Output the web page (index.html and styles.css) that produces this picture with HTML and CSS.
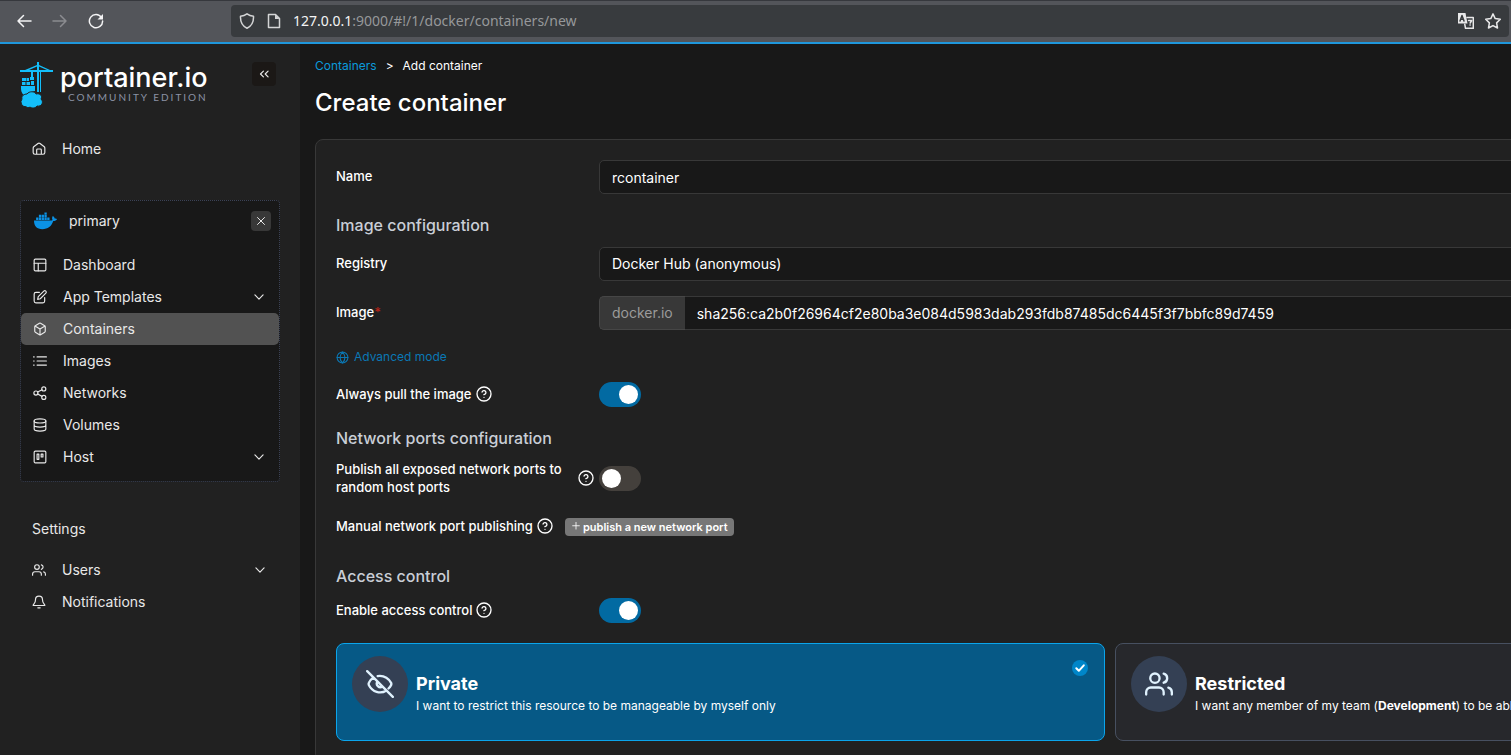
FILE: index.html
```html
<!DOCTYPE html>
<html lang="en">
<head>
  <meta charset="UTF-8">
  <meta name="viewport" content="width=device-width, initial-scale=1.0">
  <title>Portainer</title>
  <link rel="stylesheet" href="styles.css">
</head>
<body>
  <svg class="sprite" aria-hidden="true">
    <symbol id="chevron" viewBox="0 0 24 24"><path d="m5 8.500 7 7 7-7"/></symbol>
    <symbol id="help" viewBox="0 0 24 24"><circle cx="12" cy="12" r="10.500"/><path d="M9.100 9a3 3 0 0 1 5.830 1c0 2-3 3-3 3M12 17h.01"/></symbol>
    <symbol id="users" viewBox="0 0 24 24"><path d="M16 21v-2a4 4 0 0 0-4-4H5a4 4 0 0 0-4 4v2M23 21v-2a4 4 0 0 0-3-3.870M16 3.130a4 4 0 0 1 0 7.750"/><circle cx="8.500" cy="7" r="4"/></symbol>
  </svg>

  <header class="toolbar">
    <div class="nav-buttons">
      <button class="tool" aria-label="Back"><svg viewBox="0 0 16 16"><path d="M15 8H2M7.500 2.500 2 8l5.500 5.500"/></svg></button>
      <button class="tool" aria-label="Forward" disabled><svg viewBox="0 0 16 16"><path d="M1 8h13M8.500 2.500 14 8l-5.500 5.500"/></svg></button>
      <button class="tool" aria-label="Reload"><svg viewBox="0 0 16 16"><path d="M13.500 4.500A6.600 6.600 0 1 0 14.600 8"/><path class="solid" d="M15 1v5.500H9.500Z"/></svg></button>
    </div>
    <div class="address">
      <svg viewBox="0 0 16 16"><path d="M8 .8c2 1.500 4.200 2.200 6.500 2.400.3 5.600-1.700 9.800-6.500 12C3.200 13 1.200 8.800 1.500 3.200 3.800 3 6 2.300 8 .8Z"/></svg>
      <svg viewBox="0 0 16 16"><path d="M2.500 1.500h7l4 4v9h-11Z"/><path class="solid" d="M9 1.500v4.500h4.500Z"/></svg>
      <span class="url"><b>127.0.0.1</b>:9000/#!/1/docker/containers/new</span>
      <button class="tool" aria-label="Translate page"><svg viewBox="0 0 16 16"><path class="solid" d="M0 0h7.500l2 10.500H0Z"/><path d="M9 4.500h6.300v10.800H7.500l-.7-4"/><path class="ink" d="m2 8 2-5.500L6 8M2.700 6.300h2.600"/><path d="M10.500 7.500h3.200l-1.500 2.500M12 12h.2"/></svg></button>
      <button class="tool" aria-label="Bookmark page"><svg viewBox="0 0 16 16"><path d="m8 .9 2.200 4.700 5.100.7-3.700 3.600.9 5.100L8 12.600 3.500 15l.9-5.100L.7 6.300l5.100-.7Z"/></svg></button>
    </div>
  </header>

  <div class="page">
    <aside class="sidebar">
      <div class="brand">
        <svg class="crane" viewBox="0 0 33 46" aria-hidden="true">
          <path d="M17 0h2v3l11 5h3v2H0V8h5l12-5ZM9 8h8V4.500ZM19 4.500V8h8Z"/>
          <path d="M17 10h2v20h-2ZM20 10h1v20h-1ZM11 10h2v5h-2ZM10 15h4v3h-4ZM2 16h4v3H2ZM6.500 16H9v3H6.500ZM2 20h3.500v3H2ZM6.500 20H10v3H6.500ZM11 19h3v4h-3Z"/>
          <path d="M1 24h14v5c-2 0-3 1-4 2-3 0-5 1-6 3-2-1-4-4-4-7Z"/>
          <path class="cloud" d="M6 45a5 5 0 0 1-4-8c-1-3 2-5 5-5 2-3 8-3 9 0 4-1 7 2 5 5 3 3 1 8-4 7-2 3-6 2-7 1-1 1-3 1-4 0Z"/>
        </svg>
        <div class="brand-text">
          <span class="brand-name">portainer.io</span>
          <span class="brand-edition">COMMUNITY EDITION</span>
        </div>
        <button class="collapse" aria-label="Collapse sidebar"><svg viewBox="0 0 24 24"><path d="m11 17-5-5 5-5M19 17l-5-5 5-5"/></svg></button>
      </div>

      <nav>
        <a class="item home" href="#"><svg viewBox="0 0 24 24"><path d="M8 21v-7.500c0-1 .5-1.500 1.500-1.500h5c1 0 1.500.5 1.500 1.500V21M2 10.500V18a3 3 0 0 0 3 3h14a3 3 0 0 0 3-3v-7.500c0-1-.4-1.800-1-2.300l-7.200-5.600a3 3 0 0 0-3.600 0L3 8.200c-.6.5-1 1.300-1 2.300Z"/></svg>Home</a>

        <div class="environment">
          <div class="env-head">
            <svg class="whale" viewBox="0 0 24 18" aria-hidden="true"><path d="M0 8.500h17.300c.9 0 1.700-.3 2.100-.6-.8-1.300-.6-3 .2-4.200 1.200.7 1.900 1.700 2 2.700.9-.2 1.900 0 2.400.4-.5 1.400-1.900 2.200-3.900 2.200C18.300 14.500 14.500 17.500 8.700 17.500 3 17.500 0 14.500 0 8.500Z"/><path d="M2.200 5.400h2.400v2.500H2.200zM5.100 5.400h2.400v2.500H5.100zM8 5.400h2.400v2.500H8zM10.900 5.400h2.400v2.500h-2.400zM13.800 5.400h2.400v2.500h-2.400zM5.100 2.500h2.400V5H5.100zM8 2.500h2.400V5H8zM10.900 2.500h2.400V5h-2.400zM10.900 0h2.400v2.100h-2.400z"/></svg>
            <span>primary</span>
            <button class="close" aria-label="Close environment"><svg viewBox="0 0 24 24"><path d="m5 5 14 14M19 5 5 19"/></svg></button>
          </div>
          <a class="item" href="#"><svg viewBox="0 0 24 24"><rect x="2" y="2" width="20" height="20" rx="2"/><path d="M2 9h20M9 22V9"/></svg>Dashboard</a>
          <a class="item" href="#"><svg viewBox="0 0 24 24"><path d="M11 4H5a3 3 0 0 0-3 3v12a3 3 0 0 0 3 3h12a3 3 0 0 0 3-3v-6"/><path d="M18.500 2a2.300 2.300 0 0 1 3.500 3.500L12.500 15 8 16l1-4.500Z"/></svg>App Templates<svg class="more"><use href="#chevron"/></svg></a>
          <a class="item active" href="#"><svg viewBox="0 0 24 24"><path d="M21 16V8a2 2 0 0 0-1-1.700l-7-4a2 2 0 0 0-2 0l-7 4A2 2 0 0 0 3 8v8a2 2 0 0 0 1 1.700l7 4a2 2 0 0 0 2 0l7-4a2 2 0 0 0 1-1.700ZM3.300 7l8.700 5 8.700-5M12 22V12"/></svg>Containers</a>
          <a class="item" href="#"><svg viewBox="0 0 24 24"><path d="M7 5h16M7 12h16M7 19h16M1 5h1M1 12h1M1 19h1"/></svg>Images</a>
          <a class="item" href="#"><svg viewBox="0 0 24 24"><circle cx="18.500" cy="5" r="3.500"/><circle cx="5" cy="12" r="3.500"/><circle cx="18.500" cy="19.500" r="3.500"/><path d="m8 13.600 7.500 4.200M15.500 6.600 8 10.400"/></svg>Networks</a>
          <a class="item" href="#"><svg viewBox="0 0 24 24"><ellipse cx="12" cy="5" rx="10" ry="3.500"/><path d="M22 12c0 2-4.500 3.500-10 3.500S2 14 2 12M2 5v14c0 2 4.500 3.500 10 3.500S22 21 22 19V5"/></svg>Volumes</a>
          <a class="item" href="#"><svg viewBox="0 0 24 24"><rect x="2" y="2" width="20" height="20" rx="2"/><path d="M7 7h3v9H7zM14 7h3v5h-3z"/></svg>Host<svg class="more"><use href="#chevron"/></svg></a>
        </div>

        <h2 class="group-title">Settings</h2>
        <a class="item" href="#"><svg><use href="#users"/></svg>Users<svg class="more"><use href="#chevron"/></svg></a>
        <a class="item" href="#"><svg viewBox="0 0 24 24"><path d="M18 8A6 6 0 0 0 6 8c0 7-4 7-4 10h20c0-3-4-3-4-10M10 22h4"/></svg>Notifications</a>
      </nav>
    </aside>

    <main class="content">
      <nav class="breadcrumb" aria-label="Breadcrumb">
        <a href="#">Containers</a><span>&gt;</span><span>Add container</span>
      </nav>
      <h1>Create container</h1>

      <form class="panel">
        <div class="row">
          <label for="name">Name</label>
          <input class="field" id="name" type="text" value="rcontainer">
        </div>

        <h2>Image configuration</h2>
        <div class="row">
          <label for="registry">Registry</label>
          <select class="field" id="registry"><option>Docker Hub (anonymous)</option></select>
        </div>
        <div class="row image-row">
          <label for="image">Image<span class="required">*</span></label>
          <div class="group">
            <span class="addon">docker.io</span>
            <input class="field" id="image" type="text" value="sha256:ca2b0f26964cf2e80ba3e084d5983dab293fdb87485dc6445f3f7bbfc89d7459">
          </div>
        </div>
        <button class="advanced" type="button"><svg viewBox="0 0 24 24"><circle cx="12" cy="12" r="10"/><path d="M2 12h20M12 2c6 6 6 14 0 20-6-6-6-14 0-20Z"/></svg>Advanced mode</button>
        <div class="row">
          <label for="pull">Always pull the image<svg class="help"><use href="#help"/></svg></label>
          <input class="switch" id="pull" type="checkbox" checked>
        </div>

        <h2>Network ports configuration</h2>
        <div class="row">
          <label class="spread" for="publish"><span>Publish all exposed network ports to random host ports</span><svg class="help"><use href="#help"/></svg></label>
          <input class="switch" id="publish" type="checkbox">
        </div>
        <div class="ports">
          <span class="label">Manual network port publishing<svg class="help"><use href="#help"/></svg></span>
          <button class="publish" type="button"><svg viewBox="0 0 24 24"><path d="M12 1v16M4 9h16"/></svg>publish a new network port</button>
        </div>

        <h2>Access control</h2>
        <div class="row">
          <label for="access">Enable access control<svg class="help"><use href="#help"/></svg></label>
          <input class="switch" id="access" type="checkbox" checked>
        </div>

        <div class="options">
          <label class="option">
            <input type="radio" name="ownership" checked>
            <span class="badge"><svg viewBox="0 0 24 24"><path d="M10 5.200c6-1 10 3 11.500 5.800.3.600.3 1.300 0 2-.5.900-1.200 1.900-2.200 2.900M6.500 6.500C4.600 7.700 3.200 9.500 2.500 11c-.3.600-.3 1.400 0 2 3 5.700 9.700 8 15 4.500M9.900 9.900a3 3 0 0 0 4.200 4.200M1 1l22 22"/></svg></span>
            <span class="option-text"><strong>Private</strong><span>I want to restrict this resource to be manageable by myself only</span></span>
            <svg class="tick" viewBox="0 0 16 16"><circle cx="8" cy="8" r="8"/><path d="m4.300 8.300 2.500 2.500 5-5.500"/></svg>
          </label>
          <label class="option">
            <input type="radio" name="ownership">
            <span class="badge"><svg><use href="#users"/></svg></span>
            <span class="option-text"><strong>Restricted</strong><span>I want any member of my team (<b>Development</b>) to be able to manage this resource</span></span>
            <svg class="tick" viewBox="0 0 16 16"><circle cx="8" cy="8" r="8"/><path d="m4.300 8.300 2.500 2.500 5-5.500"/></svg>
          </label>
        </div>
      </form>
    </main>
  </div>
</body>
</html>
```
FILE: styles.css
```css
* {
  box-sizing: border-box;
}

body {
  margin: 0;
  height: 100vh;
  display: flex;
  flex-direction: column;
  overflow: hidden;
  background: #181818;
  color: #fff;
  font-family: Inter, sans-serif;
  font-size: 14px;
  line-height: 20px;
}

button, input, select {
  font: inherit;
  color: inherit;
  margin: 0;
}

button {
  border: 0;
  padding: 0;
  background: none;
  cursor: pointer;
}

a {
  color: inherit;
  text-decoration: none;
}

svg {
  flex: none;
  fill: none;
  stroke: currentColor;
  stroke-width: 2;
  stroke-linecap: round;
  stroke-linejoin: round;
}

.sprite {
  position: absolute;
  width: 0;
  height: 0;
}

/* browser toolbar */
.toolbar {
  flex: none;
  display: flex;
  align-items: center;
  height: 44px;
  padding: 0 2px 2px 16px;
  background: #53555a;
  border-top: 1px solid #36383d;
  border-bottom: 2px solid #1f97dc;
}

.toolbar svg {
  display: block;
  width: 16px;
  height: 16px;
  stroke-width: 1.5;
}

.toolbar .solid {
  fill: currentColor;
  stroke: none;
}

.toolbar .ink {
  stroke: #383b3e;
}

.nav-buttons {
  display: flex;
  gap: 20px;
  width: 215px;
}

.tool {
  color: #f4f4f5;
}

.tool:disabled {
  color: #8b8c90;
}

.address {
  flex: 1;
  display: flex;
  align-items: center;
  gap: 11px;
  height: 32px;
  padding: 0 8px;
  background: #383b3e;
  border-radius: 4px;
  color: #d4d5d6;
}

.address .tool {
  color: #e8e8e9;
}

.url {
  flex: 1;
  color: #96989a;
  font-family: "Noto Sans", sans-serif;
}

.url b {
  color: #f4f4f5;
  font-weight: 400;
}

.page {
  flex: 1;
  display: flex;
  min-height: 0;
}

/* sidebar */
.sidebar {
  flex: none;
  width: 300px;
  padding: 18px 20px;
  background: #212121;
  color: #e8e8e8;
}

.brand {
  display: flex;
  align-items: flex-start;
  margin-bottom: 25px;
}

.crane {
  width: 33px;
  height: 46px;
}

.crane path {
  fill: #13bef9;
  stroke: none;
}

.crane .cloud {
  stroke: #212121;
  stroke-width: 1;
}

.brand-text {
  flex: 1;
  display: flex;
  flex-direction: column;
  padding-left: 7px;
  white-space: nowrap;
}

.brand-name {
  color: #fff;
  font-size: 27px;
  font-weight: 500;
  line-height: 32px;
}

.brand-edition {
  padding-left: 8px;
  color: #8b92a5;
  font-family: Lato, sans-serif;
  font-size: 10px;
  line-height: 6px;
  letter-spacing: 2px;
}

.collapse {
  display: grid;
  place-items: center;
  width: 24px;
  height: 24px;
  margin-right: 4px;
  background: #1b1816;
  border-radius: 4px;
}

.collapse svg {
  width: 14px;
  height: 14px;
}

.item {
  display: flex;
  align-items: center;
  height: 32px;
  padding: 0 13px 0 12px;
  border-radius: 5px;
}

.item svg {
  width: 14px;
  height: 14px;
  margin-right: 16px;
}

.item .more {
  margin: 0 0 0 auto;
}

.home {
  margin-bottom: 35px;
}

.environment {
  padding-bottom: 8px;
  background: #181818;
  border: 1px dotted #3b4256;
  border-radius: 4px;
}

.item.active {
  background: #525252;
}

.env-head {
  display: flex;
  align-items: center;
  gap: 12px;
  height: 40px;
  margin-bottom: 8px;
  padding: 0 8px 0 13px;
}

.whale {
  width: 23px;
  height: 18px;
  fill: #0b92e5;
  stroke: none;
}

.close {
  display: grid;
  place-items: center;
  width: 20px;
  height: 20px;
  margin-left: auto;
  background: #383838;
  border-radius: 4px;
}

.close svg {
  width: 12px;
  height: 12px;
}

.group-title {
  margin: 37px 12px 15px;
  font-size: 14px;
  font-weight: 400;
}

/* content */
.content {
  flex: 1;
  min-width: 0;
  overflow: hidden;
  padding: 12px 15px;
}

.breadcrumb {
  display: flex;
  gap: 9px;
  font-size: 12px;
}

.breadcrumb a {
  color: #0b9adb;
}

h1 {
  margin: 12px 0 22px;
  font-size: 24px;
  font-weight: 500;
  line-height: 29px;
}

.panel {
  min-width: 1590px;
  padding: 20px;
  background: #212121;
  border: 1px solid #383838;
  border-radius: 8px;
}

.panel h2 {
  margin: 19px 0 10px;
  color: #c9ced6;
  font-size: 16px;
  font-weight: 500;
  line-height: 24px;
}

.row {
  display: grid;
  grid-template-columns: 263px 1fr;
  align-items: center;
}

.row label, .label {
  display: flex;
  align-items: center;
  gap: 4px;
  padding-bottom: 2px;
  font-size: 13px;
  font-weight: 500;
  line-height: 18px;
}

.row .spread {
  justify-content: space-between;
  padding: 0 5px 0 0;
}

.spread span {
  max-width: 230px;
}

.required {
  margin-left: -4px;
  color: #b42318;
}

.field {
  width: 100%;
  height: 34px;
  padding: 0 12px;
  background: #181818;
  border: 1px solid #383838;
  border-radius: 5px;
  appearance: none;
}

.image-row {
  margin: 15px 0 17px;
}

.group {
  display: flex;
}

.addon {
  padding: 6px 12px;
  background: #383838;
  border: 1px solid #464646;
  border-right: 0;
  border-radius: 5px 0 0 5px;
  color: #9b9b9b;
}

.group .field {
  flex: 1;
  border-left: 0;
  border-radius: 0 5px 5px 0;
}

.advanced {
  display: flex;
  align-items: center;
  gap: 5px;
  margin-bottom: 15px;
  color: #0a78b5;
  font-size: 12px;
}

.advanced svg {
  width: 13px;
  height: 13px;
}

.help {
  width: 16px;
  height: 16px;
}

.switch {
  display: flex;
  align-items: center;
  width: 42px;
  height: 25px;
  padding: 0 3px;
  background: #44403c;
  border-radius: 13px;
  appearance: none;
  cursor: pointer;
}

.switch::before {
  content: '';
  width: 19px;
  height: 19px;
  background: #fff;
  border-radius: 50%;
}

.switch:checked {
  justify-content: flex-end;
  background: #026aa2;
}

.ports {
  display: flex;
  align-items: center;
  gap: 12px;
  height: 22px;
  margin: 20px 0 26px;
}

.publish {
  display: flex;
  align-items: center;
  gap: 2px;
  height: 18px;
  padding: 0 6px;
  background: #777;
  border-radius: 4px;
  font-size: 11px;
  font-weight: 600;
}

.publish svg {
  width: 10px;
  height: 10px;
}

/* ownership cards */
.options {
  display: grid;
  grid-template-columns: 1fr 1fr;
  gap: 10px;
  margin-top: 20px;
}

.option {
  display: flex;
  gap: 8px;
  height: 98px;
  padding: 12px 16px 12px 15px;
  background: #27282c;
  border: 1px solid #475060;
  border-radius: 8px;
  cursor: pointer;
}

.option input {
  position: absolute;
  opacity: 0;
}

.option:has(input:checked) {
  background: #065986;
  border-color: #0ba5ec;
}

.badge {
  display: grid;
  place-items: center;
  width: 56px;
  height: 56px;
  background: #344054;
  border-radius: 50%;
  color: #e0f2fe;
}

.badge svg {
  width: 28px;
  height: 28px;
}

.option-text {
  flex: 1;
  padding-top: 16px;
  font-size: 12px;
}

.option-text strong {
  display: block;
  font-size: 18px;
  line-height: 24px;
}

.tick {
  width: 16px;
  height: 16px;
  margin-top: 4px;
  visibility: hidden;
}

.tick circle {
  fill: #0086c9;
  stroke: none;
}

.option input:checked ~ .tick {
  visibility: visible;
}
```
